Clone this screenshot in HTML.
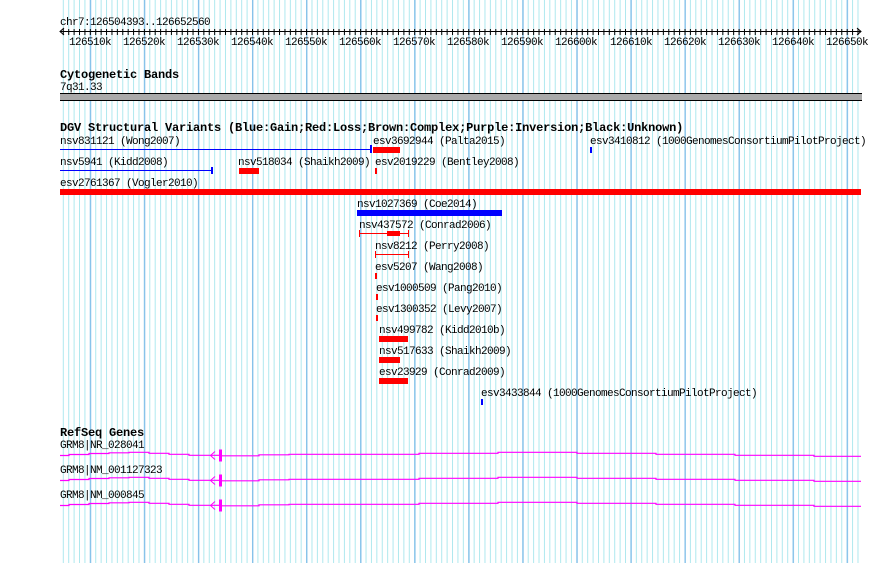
<!DOCTYPE html>
<html><head><meta charset="utf-8"><style>
html,body{margin:0;padding:0;background:#fff;}
svg{display:block}
text{font-family:"Liberation Mono",monospace;font-size:11px;letter-spacing:-0.6px;fill:#000}
.b{font-weight:bold;font-size:12px;letter-spacing:-0.2px}
</style></head><body>
<svg width="890" height="563" viewBox="0 0 890 563" xmlns="http://www.w3.org/2000/svg">
<defs>
<pattern id="mn" patternUnits="userSpaceOnUse" x="62.8" y="0" width="5.406" height="563"><rect x="0" y="0" width="1" height="563" fill="#aee8ee"/></pattern>
<pattern id="mj" patternUnits="userSpaceOnUse" x="89.8" y="0" width="54.06" height="563"><rect x="0" y="0" width="1.4" height="563" fill="#86c2ea"/></pattern>
<pattern id="tk" patternUnits="userSpaceOnUse" x="62.8" y="0" width="5.406" height="40"><rect x="0" y="29" width="1" height="6" fill="#000"/></pattern>
</defs>
<rect x="60" y="0" width="802" height="563" fill="url(#mn)"/>
<rect x="60" y="0" width="802" height="563" fill="url(#mj)"/>
<text x="60" y="25">chr7:126504393..126652560</text>
<rect x="60" y="31" width="801" height="1" fill="#000"/>
<rect x="60" y="0" width="801" height="40" fill="url(#tk)"/>
<path d="M64 28 L60 31.5 L64 35 M857 28 L861 31.5 L857 35" stroke="#000" fill="none"/>
<g text-anchor="middle">
<text x="90" y="45">126510k</text><text x="144" y="45">126520k</text><text x="198" y="45">126530k</text><text x="252" y="45">126540k</text><text x="306" y="45">126550k</text><text x="360" y="45">126560k</text><text x="414" y="45">126570k</text><text x="468" y="45">126580k</text><text x="522" y="45">126590k</text><text x="576" y="45">126600k</text><text x="631" y="45">126610k</text><text x="685" y="45">126620k</text><text x="739" y="45">126630k</text><text x="793" y="45">126640k</text><text x="847" y="45">126650k</text>
</g>
<text class="b" x="60" y="78">Cytogenetic Bands</text>
<text x="60" y="90">7q31.33</text>
<rect x="60" y="93" width="802" height="8" fill="#000"/>
<rect x="60" y="94" width="802" height="6" fill="#aaa"/>
<text class="b" x="60" y="131">DGV Structural Variants (Blue:Gain;Red:Loss;Brown:Complex;Purple:Inversion;Black:Unknown)</text>
<text x="60" y="144">nsv831121 (Wong2007)</text>
<rect x="60" y="149" width="311" height="1" fill="#00f"/><rect x="370" y="145" width="2" height="8" fill="#00f"/>
<text x="373" y="144">esv3692944 (Palta2015)</text>
<rect x="373" y="147" width="27" height="6" fill="#f00"/>
<text x="590" y="144">esv3410812 (1000GenomesConsortiumPilotProject)</text>
<rect x="590" y="147" width="2" height="6" fill="#00f"/>
<text x="60" y="165">nsv5941 (Kidd2008)</text>
<rect x="60" y="170" width="152" height="1" fill="#00f"/><rect x="211" y="167" width="2" height="7" fill="#00f"/>
<text x="238" y="165">nsv518034 (Shaikh2009)</text>
<rect x="239" y="168" width="20" height="6" fill="#f00"/>
<text x="375" y="165">esv2019229 (Bentley2008)</text>
<rect x="375" y="168" width="2" height="6" fill="#f00"/>
<text x="60" y="186">esv2761367 (Vogler2010)</text>
<rect x="60" y="189" width="801" height="6" fill="#f00"/>
<text x="357" y="207">nsv1027369 (Coe2014)</text>
<rect x="357" y="210" width="145" height="6" fill="#00f"/>
<text x="359" y="228">nsv437572 (Conrad2006)</text>
<rect x="359" y="233" width="50" height="1" fill="#f00"/><rect x="359" y="230" width="1" height="7" fill="#f00"/><rect x="408" y="230" width="1" height="7" fill="#f00"/><rect x="387" y="231" width="13" height="5" fill="#f00"/>
<text x="375" y="249">nsv8212 (Perry2008)</text>
<rect x="375" y="254" width="34" height="1" fill="#f00"/><rect x="375" y="251" width="1" height="7" fill="#f00"/><rect x="408" y="251" width="1" height="7" fill="#f00"/>
<text x="375" y="270">esv5207 (Wang2008)</text>
<rect x="375" y="273" width="2" height="6" fill="#f00"/>
<text x="376" y="291">esv1000509 (Pang2010)</text>
<rect x="376" y="294" width="2" height="6" fill="#f00"/>
<text x="376" y="312">esv1300352 (Levy2007)</text>
<rect x="376" y="315" width="2" height="6" fill="#f00"/>
<text x="379" y="333">nsv499782 (Kidd2010b)</text>
<rect x="379" y="336" width="29" height="6" fill="#f00"/>
<text x="379" y="354">nsv517633 (Shaikh2009)</text>
<rect x="379" y="357" width="21" height="6" fill="#f00"/>
<text x="379" y="375">esv23929 (Conrad2009)</text>
<rect x="379" y="378" width="29" height="6" fill="#f00"/>
<text x="481" y="396">esv3433844 (1000GenomesConsortiumPilotProject)</text>
<rect x="481" y="399" width="2" height="6" fill="#00f"/>
<text class="b" x="60" y="436">RefSeq Genes</text>
<text x="60" y="448">GRM8|NR_028041</text>
<text x="60" y="473">GRM8|NM_001127323</text>
<text x="60" y="498">GRM8|NM_000845</text>
<g id="g1">
<path d="M60 455.5H69V454.5H89V453.5H109V452.8H129V452.3H149V453.3H169V454.3H189V455.3H220V455.8H259V454.8H289V454.3H419V453.3H498V452.3H577V453.3H656V454.3H735V455.3H814V456.3H861" stroke="#f0f" stroke-width="1.2" fill="none"/>
<path d="M215 451.5 L210.5 455.5 L215 459.5" stroke="#f0f" fill="none"/>
<rect x="219" y="449.5" width="3" height="12" fill="#f0f"/>
</g>
<use href="#g1" y="25"/>
<use href="#g1" y="50"/>
</svg>
</body></html>
